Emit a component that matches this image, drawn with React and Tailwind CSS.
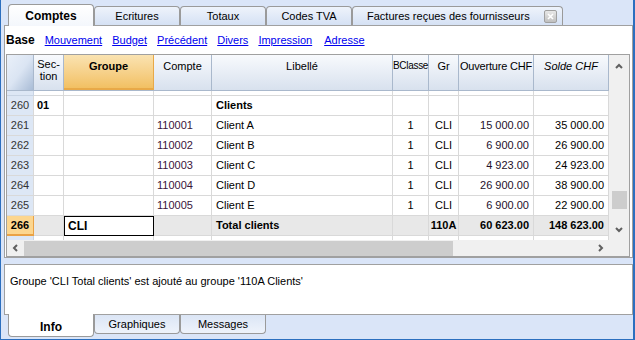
import React from "react";

const font = { fontFamily: '"Liberation Sans", Arial, sans-serif' };

const rows = [
  { n: 260, section: "01", libelle: "Clients", head: true },
  { n: 261, compte: "110001", libelle: "Client A", bc: "1", gr: "CLI", ouv: "15 000.00", solde: "35 000.00" },
  { n: 262, compte: "110002", libelle: "Client B", bc: "1", gr: "CLI", ouv: "6 900.00", solde: "26 900.00" },
  { n: 263, compte: "110003", libelle: "Client C", bc: "1", gr: "CLI", ouv: "4 923.00", solde: "24 923.00" },
  { n: 264, compte: "110004", libelle: "Client D", bc: "1", gr: "CLI", ouv: "26 900.00", solde: "38 900.00" },
  { n: 265, compte: "110005", libelle: "Client E", bc: "1", gr: "CLI", ouv: "6 900.00", solde: "22 900.00" },
];

function Chevron({ dir }) {
  const pts = {
    up: "2,6 5,3 8,6",
    down: "2,3 5,6 8,3",
    left: "6,2 3,5 6,8",
    right: "3,2 6,5 3,8",
  }[dir];
  return (
    <svg width="10" height="10" viewBox="0 0 10 10">
      <polyline points={pts} fill="none" stroke="#606060" strokeWidth="2" />
    </svg>
  );
}

function TopTab({ label, active, w }) {
  if (active) {
    return (
      <div
        className={`${w} h-[22px] -mb-px flex items-center justify-center rounded-t-[4px] border border-b-0 border-[#9a9a9a] bg-gradient-to-b from-white to-[#f4f7fc] text-[12px] font-bold text-black relative z-10`}
      >
        {label}
      </div>
    );
  }
  return (
    <div
      className={`${w} h-[19px] flex items-center justify-center rounded-t-[4px] border border-b-0 border-[#9a9a9a] bg-gradient-to-b from-[#eef3fb] to-[#d5e1f4] text-[11px] text-black whitespace-nowrap`}
    >
      {label}
    </div>
  );
}

function Row({ r }) {
  const cell = "h-[20px] border-r border-b border-[#d9d9d9] flex items-center shrink-0 whitespace-nowrap";
  return (
    <div className="flex text-[11px]">
      <div className={`${cell} w-[27px] justify-center bg-[#dde7f5] text-[11px] text-[#333] border-[#c8d4e4]`}>{r.n}</div>
      <div className={`${cell} w-[30px] pl-[3px] font-bold`}>{r.section}</div>
      <div className={`${cell} w-[90px]`}></div>
      <div className={`${cell} w-[58px] pl-[3px] text-[#3a143a]`}>{r.compte}</div>
      <div className={`${cell} w-[181px] pl-[4px] ${r.head ? "font-bold" : ""}`}>{r.libelle}</div>
      <div className={`${cell} w-[36px] justify-center`}>{r.bc}</div>
      <div className={`${cell} w-[30px] justify-center`}>{r.gr}</div>
      <div className={`${cell} w-[75px] justify-end pr-[4px] text-[#24102a]`}>{r.ouv}</div>
      <div className={`${cell} w-[75px] justify-end pr-[4px]`}>{r.solde}</div>
    </div>
  );
}

export default function App() {
  return (
    <div
      className="w-[635px] h-[340px] overflow-hidden bg-[#dae5f8] border-l border-r-2 border-b border-[#2c6fbf] flex flex-col text-black"
      style={font}
    >
      {/* top tabs */}
      <div className="h-[25px] flex items-end pl-[7px] shrink-0">
        <TopTab label="Comptes" active w="w-[86px]" />
        <TopTab label="Ecritures" w="w-[86px]" />
        <TopTab label="Totaux" w="w-[86px]" />
        <TopTab label="Codes TVA" w="w-[86px]" />
        <div className="w-[211px] h-[19px] flex items-center rounded-t-[4px] border border-b-0 border-[#9a9a9a] bg-gradient-to-b from-[#eef3fb] to-[#d5e1f4] text-[11px] pl-[14px] whitespace-nowrap">
          <span>Factures reçues des fournisseurs</span>
          <span className="ml-auto mr-[5px] w-[13px] h-[13px] rounded-[2px] border border-[#a0a0a0] bg-gradient-to-b from-[#e8e8e8] to-[#c0c0c0] flex items-center justify-center">
            <svg width="7" height="7" viewBox="0 0 7 7">
              <path d="M1 1 L6 6 M6 1 L1 6" stroke="white" strokeWidth="1.6" />
            </svg>
          </span>
        </div>
      </div>

      {/* main panel */}
      <div className="ml-[3px] w-[629px] h-[233px] bg-white border border-[#a0a0a0] flex flex-col shrink-0">
        <div className="h-[28px] flex items-center gap-[10px] pl-[1px] text-[11px] shrink-0">
          <span className="font-bold text-[12px]">Base</span>
          <span className="text-[#0000ee] underline">Mouvement</span>
          <span className="text-[#0000ee] underline">Budget</span>
          <span className="text-[#0000ee] underline">Précédent</span>
          <span className="text-[#0000ee] underline">Divers</span>
          <span className="text-[#0000ee] underline">Impression</span>
          <span className="text-[#0000ee] underline ml-[2px]">Adresse</span>
        </div>

        {/* grid */}
        <div className="ml-[1px] w-[624px] h-[203px] border border-[#a0a0a0] flex flex-col">
          <div className="flex flex-1 min-h-0">
            <div className="flex flex-col w-[602px] overflow-hidden">
              {/* header */}
              <div className="flex h-[36px] shrink-0 text-[11px] border-b border-[#a9b8cc] whitespace-nowrap">
                <div className="w-[27px] h-full bg-gradient-to-br from-[#eaf0f9] via-[#dbe5f3] to-[#a9bcd6] border-r border-[#a9b8cc]"></div>
                <div className="w-[30px] h-full bg-gradient-to-b from-[#f8fafd] to-[#d8e1ee] border-r border-[#a9b8cc] text-center leading-[12px] pt-[3px]">Sec-<br />tion</div>
                <div className="w-[90px] h-full bg-gradient-to-b from-[#fae3b1] to-[#f2c062] border-r border-b-2 border-[#e8a948] text-center font-bold pt-[3px]">Groupe</div>
                <div className="w-[58px] h-full bg-gradient-to-b from-[#f8fafd] to-[#d8e1ee] border-r border-[#a9b8cc] text-center pt-[3px]">Compte</div>
                <div className="w-[181px] h-full bg-gradient-to-b from-[#f8fafd] to-[#d8e1ee] border-r border-[#a9b8cc] text-center pt-[3px]">Libellé</div>
                <div className="w-[36px] h-full bg-gradient-to-b from-[#f8fafd] to-[#d8e1ee] border-r border-[#a9b8cc] text-center pt-[3px] text-[10px] tracking-[-0.3px]">BClasse</div>
                <div className="w-[30px] h-full bg-gradient-to-b from-[#f8fafd] to-[#d8e1ee] border-r border-[#a9b8cc] text-center pt-[3px]">Gr</div>
                <div className="w-[75px] h-full bg-gradient-to-b from-[#f8fafd] to-[#d8e1ee] border-r border-[#a9b8cc] text-center pt-[3px] tracking-[-0.2px]">Ouverture CHF</div>
                <div className="w-[75px] h-full bg-gradient-to-b from-[#f8fafd] to-[#d8e1ee] border-r border-[#a9b8cc] text-center italic pt-[3px]">Solde CHF</div>
              </div>
              {/* partially scrolled row */}
              <div className="flex h-[5px] shrink-0">
                <div className="w-[27px] bg-[#dde7f5] border-r border-b border-[#c8d4e4]"></div>
                <div className="w-[30px] border-r border-b border-[#d9d9d9]"></div>
                <div className="w-[90px] border-r border-b border-[#d9d9d9]"></div>
                <div className="w-[58px] border-r border-b border-[#d9d9d9]"></div>
                <div className="w-[181px] border-r border-b border-[#d9d9d9]"></div>
                <div className="w-[36px] border-r border-b border-[#d9d9d9]"></div>
                <div className="w-[30px] border-r border-b border-[#d9d9d9]"></div>
                <div className="w-[75px] border-r border-b border-[#d9d9d9]"></div>
                <div className="w-[75px] border-r border-b border-[#d9d9d9]"></div>
              </div>
              {rows.map((r) => (
                <Row key={r.n} r={r} />
              ))}
              {/* total row */}
              <div className="flex text-[11px] font-bold bg-[#e8e8e8] whitespace-nowrap">
                <div className="w-[27px] h-[20px] shrink-0 flex items-center justify-center bg-[#fcd68f] border-r border-b-2 border-[#eaa245] text-[11px]">266</div>
                <div className="w-[30px] h-[20px] shrink-0 border-r border-b border-[#d9d9d9]"></div>
                <div className="w-[90px] h-[20px] shrink-0 border border-black bg-white flex items-center pl-[3px] text-[12px]">CLI</div>
                <div className="w-[58px] h-[20px] shrink-0 border-r border-b border-[#d9d9d9]"></div>
                <div className="w-[181px] h-[20px] shrink-0 border-r border-b border-[#d9d9d9] flex items-center pl-[4px]">Total clients</div>
                <div className="w-[36px] h-[20px] shrink-0 border-r border-b border-[#d9d9d9]"></div>
                <div className="w-[30px] h-[20px] shrink-0 border-r border-b border-[#d9d9d9] flex items-center justify-center">110A</div>
                <div className="w-[75px] h-[20px] shrink-0 border-r border-b border-[#d9d9d9] flex items-center justify-end pr-[4px]">60 623.00</div>
                <div className="w-[75px] h-[20px] shrink-0 border-r border-b border-[#d9d9d9] flex items-center justify-end pr-[4px]">148 623.00</div>
              </div>
              <div className="flex flex-1">
                <div className="w-[27px] bg-[#dde7f5] border-r border-[#c8d4e4]"></div>
                <div className="w-[30px] border-r border-[#d9d9d9]"></div>
                <div className="w-[90px] border-r border-[#d9d9d9]"></div>
                <div className="w-[58px] border-r border-[#d9d9d9]"></div>
                <div className="w-[181px] border-r border-[#d9d9d9]"></div>
                <div className="w-[36px] border-r border-[#d9d9d9]"></div>
                <div className="w-[30px] border-r border-[#d9d9d9]"></div>
                <div className="w-[75px] border-r border-[#d9d9d9]"></div>
                <div className="w-[75px] border-r border-[#d9d9d9]"></div>
              </div>
            </div>
            {/* vertical scrollbar */}
            <div className="w-[20px] bg-[#f0f0f0] flex flex-col items-center">
              <div className="h-[17px] mt-[3px] flex items-center"><Chevron dir="up" /></div>
              <div className="flex-1"></div>
              <div className="w-[15px] h-[18px] bg-[#cdcdcd] mb-[12px]"></div>
              <div className="h-[17px] flex items-center mb-[2px]"><Chevron dir="down" /></div>
            </div>
          </div>
          {/* horizontal scrollbar */}
          <div className="h-[16px] bg-[#f0f0f0] flex items-center shrink-0">
            <div className="w-[17px] flex justify-center"><Chevron dir="left" /></div>
            <div className="w-[429px] h-[15px] bg-[#cdcdcd]"></div>
            <div className="flex-1"></div>
            <div className="w-[17px] flex justify-center mr-[20px]"><Chevron dir="right" /></div>
          </div>
        </div>
      </div>

      {/* info panel */}
      <div className="ml-[3px] mt-[6px] w-[629px] h-[51px] bg-white border border-[#a0a0a0] shrink-0 text-[11px] pl-[5px] pt-[8px]">
        Groupe 'CLI Total clients' est ajouté au groupe '110A Clients'
      </div>

      {/* bottom tabs */}
      <div className="flex items-start pl-[7px] shrink-0">
        <div className="w-[86px] h-[23px] -mt-px bg-white border border-t-0 border-[#9a9a9a] rounded-b-[4px] flex items-center justify-center font-bold text-[12px] pt-[3px]">
          Info
        </div>
        <div className="w-[86px] h-[19px] bg-gradient-to-b from-[#dbe5f5] to-[#eef3fb] border border-t-0 border-[#9a9a9a] rounded-b-[4px] flex items-center justify-center text-[11px]">
          Graphiques
        </div>
        <div className="w-[86px] h-[19px] bg-gradient-to-b from-[#dbe5f5] to-[#eef3fb] border border-t-0 border-[#9a9a9a] rounded-b-[4px] flex items-center justify-center text-[11px]">
          Messages
        </div>
      </div>
    </div>
  );
}
